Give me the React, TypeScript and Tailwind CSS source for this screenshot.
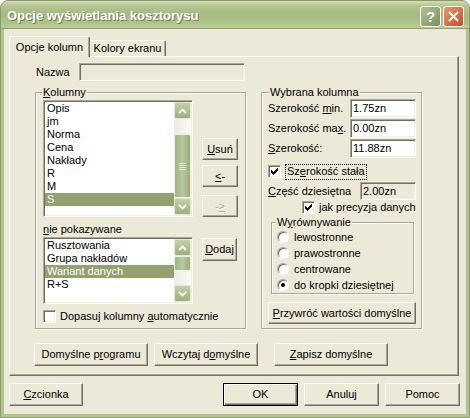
import type { ReactNode } from 'react';

const sunken =
  'border border-t-[#ACA899] border-l-[#ACA899] border-r-white border-b-white shadow-[inset_1px_1px_0_#716F64,inset_-1px_-1px_0_#F1EFE2]';
const raised =
  'border border-t-white border-l-white border-r-[#716F64] border-b-[#716F64] shadow-[inset_-1px_-1px_0_#ACA899]';

function U({ children }: { children: ReactNode }) {
  return <span className="underline decoration-1 underline-offset-[1px]">{children}</span>;
}

function Btn({
  children,
  className = '',
  disabled,
  isDefault,
}: {
  children: ReactNode;
  className?: string;
  disabled?: boolean;
  isDefault?: boolean;
}) {
  const frame = isDefault
    ? 'border border-black shadow-[inset_1px_1px_0_white,inset_-1px_-1px_0_#716F64,inset_-2px_-2px_0_#ACA899]'
    : raised;
  return (
    <div
      className={`flex shrink-0 items-center justify-center bg-[#ECE9D8] ${frame} ${
        disabled ? 'text-[#ACA899] [text-shadow:1px_1px_0_white]' : ''
      } ${className}`}
    >
      {children}
    </div>
  );
}

function Check({ checked }: { checked?: boolean }) {
  return (
    <div className={`flex h-[13px] w-[13px] shrink-0 items-center justify-center bg-white ${sunken}`}>
      {checked && (
        <svg width="7" height="7" viewBox="0 0 7 7" shapeRendering="crispEdges">
          <path
            d="M6 0h1v1H6zM5 1h2v1H5zM0 2h1v1H0zM4 2h3v1H4zM0 3h2v1H0zM3 3h3v1H3zM0 4h5v1H0zM1 5h3v1H1zM2 6h1v1H2z"
            fill="black"
          />
        </svg>
      )}
    </div>
  );
}

function Radio({ checked }: { checked?: boolean }) {
  return (
    <div className="flex h-[12px] w-[12px] shrink-0 items-center justify-center rounded-full border border-t-[#ACA899] border-l-[#ACA899] border-r-white border-b-white bg-white shadow-[inset_1px_1px_0_#716F64]">
      {checked && <div className="h-[4px] w-[4px] rounded-full bg-black" />}
    </div>
  );
}

function Group({ title, className, labelPos, children }: { title: ReactNode; className: string; labelPos: string; children: ReactNode }) {
  return (
    <div className={`relative flex shrink-0 flex-col border border-[#ACA899] shadow-[inset_1px_1px_0_white,1px_1px_0_white] ${className}`}>
      <span className={`absolute top-[-7px] bg-[#ECE9D8] px-[1px] ${labelPos}`}>{title}</span>
      {children}
    </div>
  );
}

function ScrollArrow({ down }: { down?: boolean }) {
  return (
    <div className="flex h-[17px] w-[17px] shrink-0 items-center justify-center rounded-[2px] border border-[#e2e8d4] bg-[linear-gradient(to_bottom,#c3d0aa,#9db07d)]">
      <svg width="9" height="6" viewBox="0 0 9 6">
        <polyline
          points={down ? '1,1 4.5,4.5 8,1' : '1,5 4.5,1.5 8,5'}
          fill="none"
          stroke="white"
          strokeWidth="1.8"
        />
      </svg>
    </div>
  );
}

function Rows({ items, selected }: { items: string[]; selected: string }) {
  return (
    <div className="flex flex-1 flex-col">
      {items.map((item) => (
        <div
          key={item}
          className={`h-[13px] whitespace-nowrap pl-[2px] ${item === selected ? 'bg-[#93A070] text-white' : ''}`}
        >
          {item}
        </div>
      ))}
    </div>
  );
}

export default function App() {
  return (
    <div className="h-[418px] w-[470px] bg-white text-[11px] leading-[13px] text-black [font-family:'Liberation_Sans',Arial,sans-serif]">
      <div className="flex h-full flex-col rounded-t-[8px] border border-[#8b9c69] bg-[#b2c291]">
        {/* title bar */}
        <div className="flex h-[27px] shrink-0 items-center rounded-t-[7px] bg-[linear-gradient(to_bottom,#d3ddb8_0%,#b4c591_18%,#a7ba82_50%,#b0c28c_82%,#bdcc9d_100%)] pl-[6px] pr-[5px]">
          <span className="mt-[2px] text-[13px] font-bold text-white [text-shadow:1px_1px_0_#6f7f4c]">
            Opcje wyświetlania kosztorysu
          </span>
          <div className="ml-auto mt-[3px] flex gap-[2px]">
            <div className="flex h-[21px] w-[21px] items-center justify-center rounded-[3px] border border-white bg-[linear-gradient(135deg,#b3c293,#7d8f5e)] text-[15px] font-bold leading-none text-white">
              ?
            </div>
            <div className="flex h-[21px] w-[21px] items-center justify-center rounded-[3px] border border-white bg-[linear-gradient(135deg,#eb9872,#c54d2c)]">
              <svg width="11" height="11" viewBox="0 0 11 11">
                <path d="M1 1L10 10M10 1L1 10" stroke="white" strokeWidth="2" />
              </svg>
            </div>
          </div>
        </div>
        <div className="h-[1px] shrink-0 bg-[#8fa070]" />

        {/* body */}
        <div className="mx-[3px] mb-[3px] flex flex-1 flex-col bg-[#ECE9D8] pl-[5px] pt-[7px]">
          {/* tabs */}
          <div className="flex h-[20px] items-end">
            <div className="relative z-10 -mb-[1px] flex h-[21px] w-[81px] justify-center rounded-t-[2px] border border-b-0 border-t-white border-l-white border-r-[#716F64] bg-[#ECE9D8] pt-[4px] shadow-[inset_-1px_0_0_#ACA899]">
              Opcje kolumn
            </div>
            <div className="flex h-[16px] w-[76px] justify-center rounded-t-[2px] border border-b-0 border-l-0 border-t-white border-r-[#716F64] pt-[1px] shadow-[inset_-1px_0_0_#ACA899]">
              Kolory ekranu
            </div>
          </div>

          {/* tab panel */}
          <div className={`flex h-[320px] w-[450px] flex-col ${raised}`}>
            <div className="ml-[26px] mt-[6px] flex h-[18px] items-center">
              <span className="w-[43px]">Nazwa</span>
              <div className={`h-[18px] w-[166px] bg-[#ECE9D8] ${sunken}`} />
            </div>

            <div className="ml-[25px] mt-[11px] flex gap-[15px]">
              <Group
                title={
                  <>
                    <U>K</U>olumny
                  </>
                }
                className="h-[237px] w-[211px]"
                labelPos="left-[6px]"
              >
                <div className="ml-[7px] mt-[7px] flex">
                  <div className={`flex h-[117px] w-[150px] bg-white p-[1px] ${sunken}`}>
                    <Rows items={['Opis', 'jm', 'Norma', 'Cena', 'Nakłady', 'R', 'M', 'S']} selected="S" />
                    <div className="flex w-[17px] flex-col bg-[linear-gradient(to_right,#ecebe3,#fbfbf8)]">
                      <ScrollArrow />
                      <div className="h-[15px]" />
                      <div className="flex h-[64px] flex-col items-center justify-center gap-[1px] rounded-[2px] border border-[#eef2e6] bg-[linear-gradient(to_right,#a2b481,#b9c89e_50%,#9aad79)]">
                        <div className="h-[1px] w-[7px] bg-[#dfe6cf]" />
                        <div className="h-[1px] w-[7px] bg-[#dfe6cf]" />
                        <div className="h-[1px] w-[7px] bg-[#dfe6cf]" />
                        <div className="h-[1px] w-[7px] bg-[#dfe6cf]" />
                      </div>
                      <ScrollArrow down />
                    </div>
                  </div>
                  <div className="ml-[9px] flex flex-col">
                    <Btn className="mt-[38px] h-[22px] w-[36px]">
                      <U>U</U>suń
                    </Btn>
                    <Btn className="mt-[5px] h-[22px] w-[36px]">
                      <U>&lt;</U>-
                    </Btn>
                    <Btn disabled className="mt-[8px] h-[22px] w-[36px]">
                      -<U>&gt;</U>
                    </Btn>
                  </div>
                </div>

                <div className="ml-[7px] mt-[6px]">
                  <U>n</U>ie pokazywane
                </div>
                <div className="ml-[7px] mt-[1px] flex">
                  <div className={`flex h-[67px] w-[150px] bg-white p-[1px] ${sunken}`}>
                    <Rows items={['Rusztowania', 'Grupa nakładów', 'Wariant danych', 'R+S']} selected="Wariant danych" />
                    <div className="flex w-[17px] flex-col bg-[linear-gradient(to_right,#ecebe3,#fbfbf8)]">
                      <ScrollArrow />
                      <div className="h-[15px] rounded-[2px] border border-[#eef2e6] bg-[linear-gradient(to_right,#a2b481,#b9c89e_50%,#9aad79)]" />
                      <div className="flex-1" />
                      <ScrollArrow down />
                    </div>
                  </div>
                  <Btn className="ml-[9px] mt-[1px] h-[23px] w-[35px]">
                    <U>D</U>odaj
                  </Btn>
                </div>

                <div className="ml-[7px] mt-[6px] flex items-center">
                  <Check />
                  <span className="ml-[4px]">
                    Dopasuj kolumny <U>a</U>utomatycznie
                  </span>
                </div>
              </Group>

              <Group title="Wybrana kolumna" className="h-[237px] w-[161px]" labelPos="left-[7px]">
                <div className="ml-[6px] mt-[6px] flex w-[148px] flex-col">
                  <div className="flex h-[19px] items-center justify-between">
                    <span>
                      Szerokość <U>m</U>in.
                    </span>
                    <div className={`flex h-[19px] w-[66px] items-center bg-white pl-[2px] ${sunken}`}>1.75zn</div>
                  </div>
                  <div className="mt-[1px] flex h-[19px] items-center justify-between">
                    <span>
                      Szerokość ma<U>x</U>.
                    </span>
                    <div className={`flex h-[19px] w-[66px] items-center bg-white pl-[2px] ${sunken}`}>0.00zn</div>
                  </div>
                  <div className="mt-[1px] flex h-[19px] items-center justify-between">
                    <span>
                      <U>S</U>zerokość:
                    </span>
                    <div className={`flex h-[19px] w-[66px] items-center bg-white pl-[2px] ${sunken}`}>11.88zn</div>
                  </div>

                  <div className="mt-[7px] flex h-[13px] items-center">
                    <Check checked />
                    <span className="ml-[4px] flex h-[16px] items-center border border-dotted border-black px-[1px]">
                      Sz<U>e</U>rokość stała
                    </span>
                  </div>

                  <div className="mt-[4px] flex h-[18px] items-center justify-between">
                    <span>
                      <U>C</U>zęść dziesiętna
                    </span>
                    <div className={`flex h-[18px] w-[56px] items-center bg-[#ECE9D8] pl-[2px] ${sunken}`}>2.00zn</div>
                  </div>

                  <div className="ml-[34px] mt-[1px] flex h-[13px] items-center">
                    <Check checked />
                    <span className="ml-[4px]">jak precyzja danych</span>
                  </div>

                  <Group
                    title={
                      <>
                        W<U>y</U>równywanie
                      </>
                    }
                    className="ml-[3px] mt-[8px] h-[72px] w-[143px] pt-[6px]"
                    labelPos="left-[4px]"
                  >
                    {['lewostronne', 'prawostronne', 'centrowane', 'do kropki dziesiętnej'].map((label) => (
                      <div key={label} className="flex h-[16px] items-center pl-[5px]">
                        <Radio checked={label === 'do kropki dziesiętnej'} />
                        <span className="ml-[5px]">{label}</span>
                      </div>
                    ))}
                  </Group>

                  <Btn className="mt-[8px] h-[22px] w-[148px]">
                    <span>
                      <U>P</U>rzywróć wartości domyślne
                    </span>
                  </Btn>
                </div>
              </Group>
            </div>

            <div className="ml-[24px] mt-[14px] flex">
              <Btn className="h-[23px] w-[114px]">
                <span>
                  Domyślne p<U>r</U>ogramu
                </span>
              </Btn>
              <Btn className="ml-[6px] h-[23px] w-[104px]">
                <span>
                  Wczytaj d<U>o</U>myślne
                </span>
              </Btn>
              <Btn className="ml-[16px] h-[23px] w-[114px]">
                <span>
                  <U>Z</U>apisz domyślne
                </span>
              </Btn>
            </div>
          </div>

          {/* dialog buttons */}
          <div className="mt-[7px] flex">
            <Btn className="h-[23px] w-[74px]">
              <span>
                <U>C</U>zcionka
              </span>
            </Btn>
            <Btn isDefault className="ml-[140px] h-[23px] w-[75px]">
              OK
            </Btn>
            <Btn className="ml-[6px] h-[23px] w-[75px]">Anuluj</Btn>
            <Btn className="ml-[6px] h-[23px] w-[75px]">Pomoc</Btn>
          </div>
        </div>
      </div>
    </div>
  );
}
